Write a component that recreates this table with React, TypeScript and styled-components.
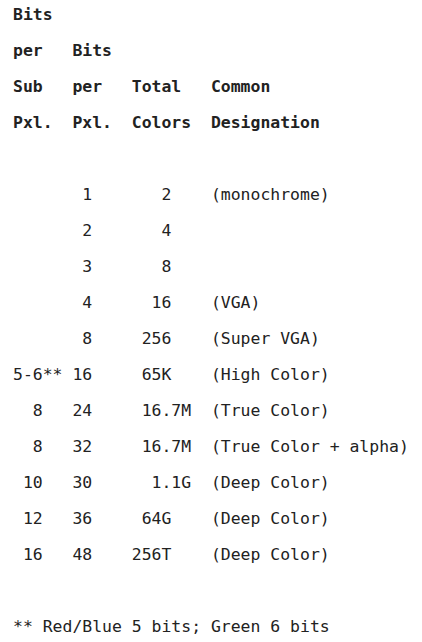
import React from "react";
import styled, { createGlobalStyle } from "styled-components";

const Global = createGlobalStyle`
  html, body { margin: 0; padding: 0; background: #ffffff; }
  body { font-family: "DejaVu Sans Mono", "Liberation Mono", monospace; }
`;

const Listing = styled.div`
  display: flex;
  flex-direction: column;
  padding: 0 0 0 13px;
  margin-top: -3px;
  color: #222222;
  font-family: "DejaVu Sans Mono", "Liberation Mono", monospace;
  font-size: 16.45px;
`;

const Line = styled.div<{ $bold?: boolean }>`
  height: 36px;
  line-height: 36px;
  white-space: pre;
  font-weight: ${(p) => (p.$bold ? 700 : 400)};
`;

const header = [
  "Bits",
  "per   Bits",
  "Sub   per   Total   Common",
  "Pxl.  Pxl.  Colors  Designation",
];

const body = [
  "",
  "       1       2    (monochrome)",
  "       2       4",
  "       3       8",
  "       4      16    (VGA)",
  "       8     256    (Super VGA)",
  "5-6** 16     65K    (High Color)",
  "  8   24     16.7M  (True Color)",
  "  8   32     16.7M  (True Color + alpha)",
  " 10   30      1.1G  (Deep Color)",
  " 12   36     64G    (Deep Color)",
  " 16   48    256T    (Deep Color)",
  "",
  "** Red/Blue 5 bits; Green 6 bits",
];

export default function App() {
  return (
    <>
      <Global />
      <Listing>
        {header.map((t, i) => (
          <Line key={"h" + i} $bold>
            {t}
          </Line>
        ))}
        {body.map((t, i) => (
          <Line key={"b" + i}>{t}</Line>
        ))}
      </Listing>
    </>
  );
}
